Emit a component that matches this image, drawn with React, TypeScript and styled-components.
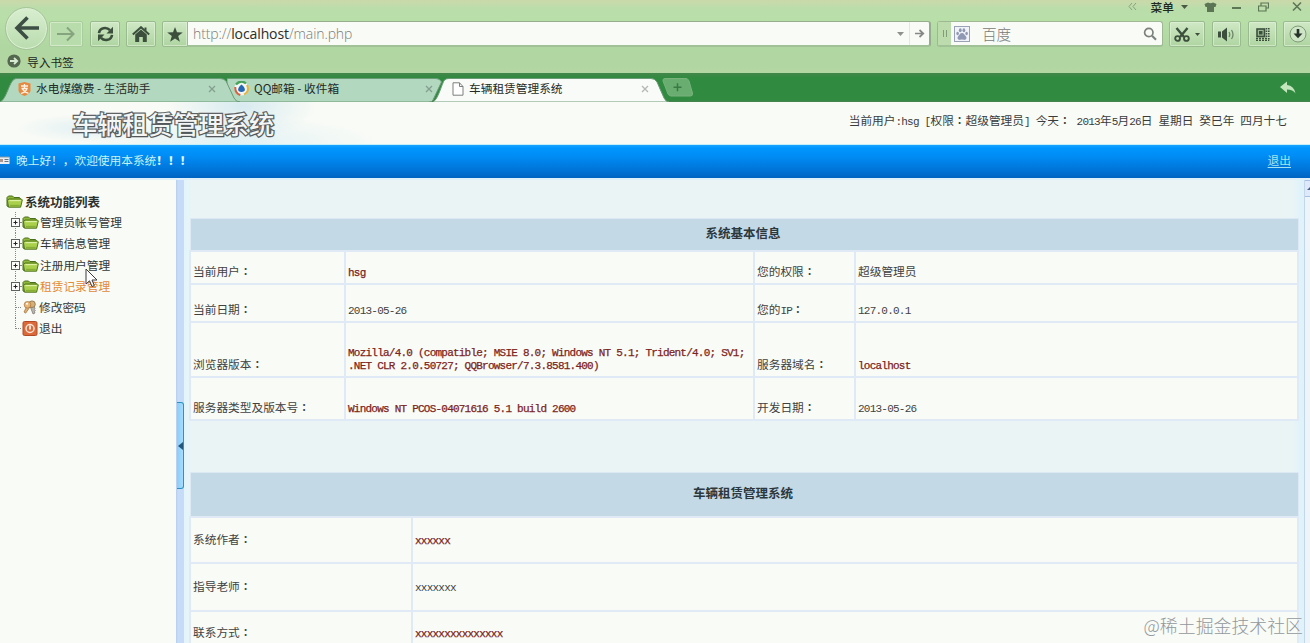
import React from "react";
import styled, { createGlobalStyle, css } from "styled-components";

const Global = createGlobalStyle`
  * { box-sizing: border-box; }
  html, body { margin: 0; padding: 0; overflow: hidden; }
  body {
    font-family: "Noto Sans CJK SC", sans-serif;
    font-size: 11.7px;
    line-height: 13px;
    color: #3a3c3c;
  }
`;

/* ---------- text: full-width ideographs mixed with half-width latin ---------- */

const Half = styled.span<{ $bold?: boolean }>`
  font-family: "Liberation Mono", monospace;
  font-size: 11px;
  letter-spacing: -0.77px;
  line-height: 0;
  white-space: pre;
  ${(p) => p.$bold && css`-webkit-text-stroke: 0.25px currentColor;`}
`;

const Colon = styled.span`
  font-family: "Noto Sans CJK TC", sans-serif;
  font-weight: 500;
  line-height: 0;
`;

function Mixed({ text, bold }: { text: string; bold?: boolean }) {
  const runs = text.match(/[\x20-\x7e]+|：|[^\x20-\x7e：]+/g) || [];
  return (
    <>
      {runs.map((run, i) => {
        if (run === "：") return <Colon key={i}>{run}</Colon>;
        if (/^[\x20-\x7e]/.test(run)) return <Half key={i} $bold={bold}>{run}</Half>;
        return <React.Fragment key={i}>{run}</React.Fragment>;
      })}
    </>
  );
}

/* ---------- window ---------- */

const Screen = styled.div`
  position: relative;
  width: 1310px;
  height: 643px;
  overflow: hidden;
  display: flex;
  flex-direction: column;
  background: #f8fbf6;
`;

const Chrome = styled.header`
  height: 73px;
  flex: none;
  background: linear-gradient(#cad8a9 0, #c5dbab 4px, #badda9 8px, #b9dfa9 20px, #b0d6a1 46px, #b3d6a3 73px);
`;

const TitleRow = styled.div`
  height: 13px;
  display: flex;
  justify-content: flex-end;
  align-items: center;
  padding-right: 8px;
  color: #202a1e;
`;

const MenuLabel = styled.span`
  margin: 0 7px 0 14px;
  font-weight: 500;
`;

const WindowIcon = styled.svg<{ $gap: number }>`
  margin-left: ${(p) => p.$gap}px;
  flex: none;
`;

const ToolRow = styled.div`
  height: 42px;
  display: flex;
  align-items: center;
  padding-left: 5px;
`;

const BackButton = styled.div`
  width: 43px;
  height: 43px;
  margin-top: -12px;
  flex: none;
  border-radius: 50%;
  border: 1px solid #a5c49a;
  background: linear-gradient(#d9eed0, #b9dcae);
  box-shadow: inset 0 0 0 1px #dcf0d3;
  display: flex;
  align-items: center;
  justify-content: center;
`;

const ToolButton = styled.div<{ $w: number; $gap?: number; $joined?: boolean; $faint?: boolean }>`
  width: ${(p) => p.$w}px;
  height: 26px;
  flex: none;
  margin-left: ${(p) => p.$gap ?? 7}px;
  display: flex;
  align-items: center;
  justify-content: center;
  gap: 5px;
  border: 1px solid ${(p) => (p.$faint ? "#a9cd9c" : "#9abb8f")};
  border-radius: ${(p) => (p.$joined ? "2px 0 0 2px" : "2px")};
  background: ${(p) => (p.$faint ? "#b8dcab" : "linear-gradient(#cfe8c5, #afd5a1)")};
  box-shadow: inset 0 0 0 1px rgba(226, 244, 218, 0.6);
`;

const AddressBar = styled.div`
  width: 743px;
  height: 26px;
  flex: none;
  display: flex;
  align-items: center;
  padding-left: 5px;
  background: #f9fbf7;
  border: 1px solid #95ad8c;
  border-width: 1px 2px 2px 0;
  border-bottom-color: #a1c196;
  border-radius: 0 3px 3px 0;
`;

const Url = styled.span`
  flex: 1;
  font-family: "Open Sans", sans-serif;
  font-size: 14px;
  letter-spacing: -0.1px;
  font-weight: 300;
  color: #7b7d7a;
  b { font-weight: 400; color: #2b2d2a; }
`;

const GoCell = styled.div`
  width: 20px;
  height: 23px;
  margin-left: 5px;
  border-left: 1px solid #e3e8e0;
  display: flex;
  align-items: center;
  justify-content: center;
`;

const SearchBar = styled.div`
  width: 226px;
  height: 26px;
  flex: none;
  margin-left: 6px;
  display: flex;
  align-items: center;
  background: #f9fbf7;
  border: 1px solid #9db893;
  border-bottom: 2px solid #a1c196;
  border-radius: 3px;
  padding-right: 5px;
`;

const Grip = styled.div`
  width: 13px;
  height: 23px;
  background: #bcdcae;
  display: flex;
  align-items: center;
  justify-content: center;
  gap: 2px;
  i { width: 1px; height: 7px; background: #7f9d77; }
`;

const EngineIcon = styled.svg`
  margin: 2px 0 0 3px;
`;

const SearchHint = styled.span`
  flex: 1;
  padding: 0 0 1px 11px;
  font-size: 14.6px;
  font-weight: 300;
  color: #777a78;
`;

const BookmarkRow = styled.div`
  height: 18px;
  display: flex;
  align-items: center;
  gap: 6px;
  padding: 0 0 6px 7px;
  color: #1d281b;
`;

/* ---------- tabs ---------- */

const TabBar = styled.div`
  height: 29px;
  flex: none;
  display: flex;
  align-items: flex-end;
  background: linear-gradient(#44864b, #308a40 5px, #308a40 27px, #4a8351);
`;

const TabBox = styled.div<{ $w: number; $lap?: number; $pad: number; $end: number; $front?: number }>`
  position: relative;
  z-index: ${(p) => p.$front ?? 1};
  width: ${(p) => p.$w}px;
  height: 24px;
  flex: none;
  margin-left: ${(p) => -(p.$lap ?? 0)}px;
  padding: 0 ${(p) => p.$end}px 3px ${(p) => p.$pad}px;
  display: flex;
  align-items: center;
  color: #222b27;
`;

const TabShape = styled.svg`
  position: absolute;
  left: 0;
  top: 0;
  z-index: -1;
`;

const TabText = styled.span`
  flex: 1;
  margin: 0 0 2px 5px;
  white-space: pre;
`;

const TabTail = styled.div`
  flex: 1;
  height: 24px;
  display: flex;
  justify-content: space-between;
  align-items: flex-start;
  padding: 0 14px 0 0;
  margin-left: -7px;
`;

/* ---------- site header ---------- */

const Banner = styled.div`
  height: 43px;
  flex: none;
  display: flex;
  align-items: center;
  justify-content: space-between;
  padding: 0 23px 2px 72px;
  border-bottom: 1px solid #c5eefa;
  background:
    radial-gradient(ellipse 75px 34px at 242px 4px, rgba(198, 226, 236, 0.65), transparent),
    radial-gradient(ellipse 70px 14px at 85px 26px, rgba(205, 231, 240, 0.5), transparent),
    radial-gradient(ellipse 150px 26px at 230px 40px, rgba(222, 240, 244, 0.9), transparent),
    #f9fbf6;
`;

const SiteName = styled.h1`
  margin: 2px 0 0;
  font-size: 25.3px;
  line-height: 30px;
  font-weight: 500;
  color: #f4f6f5;
  -webkit-text-stroke: 2.4px #5d6365;
  paint-order: stroke fill;
  text-shadow: 1px 1px 1px rgba(60, 66, 68, 0.4);
`;

const Status = styled.div`
  white-space: pre;
  margin-bottom: 5px;
`;

const BlueBar = styled.div`
  height: 33px;
  flex: none;
  display: flex;
  align-items: center;
  padding: 0 19px 3px 0;
  color: #c5f2f6;
  background: linear-gradient(#18a5ff 0, #0096ff 3px, #008bf3 12px, #0074d8 25px, #0063c0 33px);
`;

const Greeting = styled.span`
  flex: 1;
  margin: 0 0 1px 6px;
  b { font-weight: 900; color: #e2fbff; }
`;

const Logout = styled.a`
  margin-bottom: 2px;
  color: #a5e4ee;
  text-decoration: underline;
  text-underline-offset: 2px;
`;

/* ---------- body ---------- */

const Body = styled.div`
  flex: 1;
  min-height: 0;
  display: flex;
  border-top: 2px solid #e0f0fb;
`;

const Sidebar = styled.nav`
  width: 176px;
  flex: none;
  padding: 11px 0 0 6px;
`;

const RootNode = styled.div`
  height: 21px;
  display: flex;
  align-items: center;
  gap: 2px;
  font-size: 12.5px;
  font-weight: 700;
  color: #2c302c;
  span { padding-bottom: 1px; }
`;

const TreeRow = styled.div<{ $hot?: boolean }>`
  height: 21.25px;
  display: flex;
  align-items: center;
  padding-left: 5px;
  color: ${(p) => (p.$hot ? "#e28a35" : "#333735")};
`;

const Joint = styled.svg`
  flex: none;
`;

const NodeText = styled.span`
  margin: 0 0 2px 1px;
`;

const Splitter = styled.div`
  width: 8px;
  flex: none;
  background: linear-gradient(90deg, #b6cdec, #c8dcf8 2px, #c5dbf8);
  display: flex;
  flex-direction: column;
  padding-top: 222px;
`;

const Handle = styled.div`
  height: 87px;
  margin-left: 1px;
  border: 1px solid #2c93bf;
  border-left: 0;
  border-radius: 0 3px 3px 0;
  background: linear-gradient(90deg, #8acdf8, #a6dcff);
  display: flex;
  align-items: center;
  justify-content: flex-end;
`;

const Content = styled.main`
  flex: 1;
  min-width: 0;
  padding: 38px 5px 0 5px;
  background: linear-gradient(90deg, #e2f5fb, #eaf4f5 9px, #eaf4f5 1108px, #e0f3fa 1116px);
`;

const ScrollTrack = styled.div`
  width: 6px;
  flex: none;
  border-left: 1px solid #c3d6ea;
  background: #eef5fa;
`;

const ScrollUp = styled.div`
  height: 17px;
  border: 1px solid #a9bfe2;
  border-width: 1px 0 1px 0;
  background: #dfe9fb;
  display: flex;
  align-items: center;
  justify-content: flex-end;
`;

const Grid = styled.table`
  width: 1110px;
  border-collapse: collapse;
  table-layout: fixed;
  border: 1px solid #dce9f5;
  & + & { margin-top: 51px; }
`;

const Head = styled.th<{ $h: number }>`
  height: ${(p) => p.$h}px;
  padding: 0 2px 3px 0;
  background: #c3d9e5;
  color: #2b383e;
  font-size: 12.5px;
  font-weight: 700;
`;

const Cell = styled.td<{ $h?: number; $mid?: boolean; $red?: boolean }>`
  ${(p) => p.$h && css`height: ${p.$h}px;`}
  vertical-align: ${(p) => (p.$mid ? "middle" : "bottom")};
  padding: 0 2px ${(p) => (p.$mid ? 3 : 6)}px 2px;
  border: 2px solid #e0e9f6;
  background: #f8fbf6;
  color: ${(p) => (p.$red ? "#7d2420" : "#3f4242")};
  line-height: 13px;
  white-space: nowrap;
`;

const Watermark = styled.div`
  position: absolute;
  right: 7px;
  bottom: 6px;
  font-size: 17.9px;
  line-height: 24px;
  font-weight: 300;
  color: #92979a;
  text-shadow: 0 0 1px #fff;
`;

const Pointer = styled.svg`
  position: absolute;
  left: 85px;
  top: 268px;
`;

/* ---------- icons ---------- */

const Folder = () => (
  <svg width="17" height="15" viewBox="0 0 17 15">
    <path d="M1 12V3.5L2.5 2h4L8 3.5h5.5L14.5 5v7.5H2z" fill="#8fb83a" stroke="#4d6f1c" />
    <path d="M2.5 13.2 1.4 6.4 3 5h12.4l.9 1-1.7 7.2z" fill="#a9cf4b" stroke="#50751d" />
    <path d="M3.4 6.6h11.4" stroke="#dcf0a0" strokeWidth="1.2" />
    <path d="M4 11.6h9.7" stroke="#88ad35" strokeWidth="1.5" />
  </svg>
);

const KeyIcon = () => (
  <svg width="16" height="15" viewBox="0 0 16 15">
    <path d="M8 6 11 14l2-1-.6-1.5 1-.8-1-1.2.6-1L11 4" fill="#b8b6ae" stroke="#77746d" strokeWidth=".7" />
    <circle cx="10" cy="4.2" r="3.3" fill="#d4b07a" stroke="#8a6b43" strokeWidth=".8" />
    <path d="M5 6 2 12l1.6 1.2L8 7" fill="#e0b070" stroke="#a06d35" strokeWidth=".7" />
    <circle cx="5.5" cy="4.8" r="3.3" fill="#eab876" stroke="#ad7a42" strokeWidth=".8" />
    <circle cx="5" cy="3.8" r="1" fill="#fff" />
  </svg>
);

const PowerIcon = () => (
  <svg width="16" height="15" viewBox="0 0 16 15">
    <rect x="1" y=".5" width="14" height="14" rx="1.5" fill="#db6a3b" stroke="#b34a25" />
    <circle cx="8" cy="7.5" r="4" fill="none" stroke="#fae4d6" strokeWidth="1.5" />
    <path d="M8 4.5v4" stroke="#fff" strokeWidth="1.6" />
  </svg>
);

const Branch = ({ kind }: { kind: "plus" | "leaf" | "last" }) => (
  <Joint width="11" height="21" viewBox="0 0 11 21">
    <path d={kind === "last" ? "M4.5 0V11" : "M4.5 0V21"} stroke="#858985" strokeDasharray="1 1" />
    {kind !== "plus" && <path d="M5 10.5h6" stroke="#858985" strokeDasharray="1 1" />}
    {kind === "plus" && (
      <>
        <rect x=".5" y="6.5" width="8" height="8" fill="#fbfcfa" stroke="#5d625e" />
        <path d="M2.5 10.5h4M4.5 8.5v4" stroke="#222" />
        <path d="M9 10.5h2" stroke="#858985" />
      </>
    )}
  </Joint>
);

const Caret = ({ color = "#4b5a47" }: { color?: string }) => (
  <svg width="7" height="4" viewBox="0 0 7 4">
    <path d="M0 0h7L3.5 4z" fill={color} />
  </svg>
);

const CloseX = ({ color }: { color: string }) => (
  <svg width="8" height="8" viewBox="0 0 8 8">
    <path d="M1 1l6 6M7 1 1 7" stroke={color} strokeWidth="1.3" />
  </svg>
);

const INK = "#3c4f3d";

type TabProps = { w: number; lap?: number; pad: number; end: number; d: string; fill: string; icon: React.ReactNode; label: string; x: string; front?: number };

function Tab({ w, lap, pad, end, d, fill, icon, label, x, front }: TabProps) {
  return (
    <TabBox $w={w} $lap={lap} $pad={pad} $end={end} $front={front}>
      <TabShape width={w} height="24" viewBox={`0 0 ${w} 24`}>
        <path d={d} fill={fill} stroke="#6b9a76" strokeWidth="1" />
      </TabShape>
      {icon}
      <TabText>{label}</TabText>
      <CloseX color={x} />
    </TabBox>
  );
}

const tree: { label: string; kind: "plus" | "leaf" | "last"; icon: React.ReactNode; hot?: boolean }[] = [
  { label: "管理员帐号管理", kind: "plus", icon: <Folder /> },
  { label: "车辆信息管理", kind: "plus", icon: <Folder /> },
  { label: "注册用户管理", kind: "plus", icon: <Folder /> },
  { label: "租赁记录管理", kind: "plus", icon: <Folder />, hot: true },
  { label: "修改密码", kind: "leaf", icon: <KeyIcon /> },
  { label: "退出", kind: "last", icon: <PowerIcon /> },
];

type Value = { lines: string[]; red?: boolean };
const info: { h: number; a: string; av: Value; b: string; bv: Value }[] = [
  { h: 33, a: "当前用户：", av: { lines: ["hsg"], red: true }, b: "您的权限：", bv: { lines: ["超级管理员"] } },
  { h: 38, a: "当前日期：", av: { lines: ["2013-05-26"] }, b: "您的IP：", bv: { lines: ["127.0.0.1"] } },
  {
    h: 55,
    a: "浏览器版本：",
    av: {
      lines: [
        "Mozilla/4.0 (compatible; MSIE 8.0; Windows NT 5.1; Trident/4.0; SV1;",
        ".NET CLR 2.0.50727; QQBrowser/7.3.8581.400)",
      ],
      red: true,
    },
    b: "服务器域名：",
    bv: { lines: ["localhost"], red: true },
  },
  {
    h: 43,
    a: "服务器类型及版本号：",
    av: { lines: ["Windows NT PCOS-04071616 5.1 build 2600"], red: true },
    b: "开发日期：",
    bv: { lines: ["2013-05-26"] },
  },
];

const about = [
  { label: "系统作者：", value: "xxxxxx", red: true, h: 46 },
  { label: "指导老师：", value: "xxxxxxx", red: false, h: 48 },
  { label: "联系方式：", value: "xxxxxxxxxxxxxxx", red: true, h: 44 },
];

const ValueCell = ({ v }: { v: Value }) => (
  <Cell $red={v.red}>
    {v.lines.map((line) => (
      <div key={line}>
        <Mixed text={line} bold={v.red} />
      </div>
    ))}
  </Cell>
);

export default function App() {
  return (
    <Screen>
      <Global />
      <Chrome>
        <TitleRow>
          <WindowIcon $gap={0} width="9" height="9" viewBox="0 0 9 9">
            <path d="M4 1 1 4.5 4 8M8 1 5 4.5 8 8" fill="none" stroke="#86a27e" />
          </WindowIcon>
          <MenuLabel>菜单</MenuLabel>
          <Caret />
          <WindowIcon $gap={16} width="13" height="10" viewBox="0 0 13 10">
            <path d="M.5 2 4 .5Q6.500 2 9 .5L12.500 2 11.500 5H10v5H3V5H1.500z" fill="#5c7555" />
          </WindowIcon>
          <WindowIcon $gap={15} width="9" height="9" viewBox="0 0 9 9">
            <path d="M0 6h9" stroke="#5c7555" strokeWidth="2" />
          </WindowIcon>
          <WindowIcon $gap={17} width="11" height="10" viewBox="0 0 11 10">
            <path d="M3 4V1h7.500v5H8M.5 4H8v5H.5z" fill="none" stroke="#5c7555" strokeWidth="1.2" />
          </WindowIcon>
          <WindowIcon $gap={23} width="10" height="9" viewBox="0 0 10 9">
            <path d="M1 .5 9 8.500M9 .5 1 8.500" stroke="#5c7555" strokeWidth="1.5" />
          </WindowIcon>
        </TitleRow>
        <ToolRow>
          <BackButton>
            <svg width="26" height="26" viewBox="0 0 26 26">
              <path d="M25 13H3M13.500 2.500 3 13l10.500 10.500" fill="none" stroke="#3d4f45" strokeWidth="3.600" />
            </svg>
          </BackButton>
          <ToolButton $w={34} $gap={1} $faint>
            <svg width="18" height="16" viewBox="0 0 18 16">
              <path d="M0 8h16M10 1.500 16.500 8 10 14.500" fill="none" stroke="#86a47e" strokeWidth="2" />
            </svg>
          </ToolButton>
          <ToolButton $w={30}>
            <svg width="17" height="16" viewBox="0 0 17 16">
              <path d="M2 7.200C2.600 1.500 9.500.500 13 4.200" fill="none" stroke={INK} strokeWidth="2.600" />
              <path d="M16 .8v6.700H9.500z" fill={INK} />
              <path d="M15 8.800C14.400 14.500 7.500 15.500 4 11.800" fill="none" stroke={INK} strokeWidth="2.600" />
              <path d="M1 15.200V8.500h6.500z" fill={INK} />
            </svg>
          </ToolButton>
          <ToolButton $w={30} $gap={6}>
            <svg width="18" height="16" viewBox="0 0 18 16">
              <path d="M.8 8.600 9 1.200l8.200 7.400" fill="none" stroke={INK} strokeWidth="2" />
              <path d="M3.200 8.600 9 3.600l5.800 5V16h-4v-5H7.200v5h-4z" fill={INK} />
              <path d="M12.500 1.500h2v3.500l-2-1.500z" fill={INK} />
            </svg>
          </ToolButton>
          <ToolButton $w={26} $gap={6} $joined>
            <svg width="16" height="15" viewBox="0 0 16 15">
              <path d="m8 0 2 5.300 5.800.2-4.600 3.500 1.700 5.700L8 11.500l-4.900 3.200L4.800 9 .2 5.500 6 5.300z" fill={INK} />
            </svg>
          </ToolButton>
          <AddressBar>
            <Url>http://<b>localhost</b>/main.php</Url>
            <Caret color="#8e918e" />
            <GoCell>
              <svg width="10" height="9" viewBox="0 0 10 9">
                <path d="M0 4.500h8M4.500 1 8.300 4.500 4.500 8" fill="none" stroke="#858985" strokeWidth="1.700" />
              </svg>
            </GoCell>
          </AddressBar>
          <SearchBar>
            <Grip><i /><i /></Grip>
            <EngineIcon width="17" height="17" viewBox="0 0 17 17">
              <rect x=".5" y=".5" width="15" height="15" fill="#f1f3f8" stroke="#9aa2b8" />
              <g fill="#8f99b3">
                <ellipse cx="3.600" cy="7.500" rx="1.300" ry="1.800" />
                <ellipse cx="6.300" cy="4.200" rx="1.400" ry="2" />
                <ellipse cx="9.900" cy="4.200" rx="1.400" ry="2" />
                <ellipse cx="12.600" cy="7.500" rx="1.300" ry="1.800" />
                <path d="M8 7c2 0 2.500 2 4 3.500 1.500 2-.5 3.800-2 3.300q-2-.5-4 0c-1.500.5-3.500-1.300-2-3.300C5.500 9 6 7 8 7z" />
              </g>
            </EngineIcon>
            <SearchHint>百度</SearchHint>
            <svg width="14" height="14" viewBox="0 0 14 14">
              <circle cx="5.800" cy="5.500" r="4.200" fill="none" stroke="#7d817d" strokeWidth="1.700" />
              <path d="m9 8.800 4 4" stroke="#7d817d" strokeWidth="2.200" />
            </svg>
          </SearchBar>
          <ToolButton $w={36} $gap={6}>
            <svg width="16" height="15" viewBox="0 0 16 15">
              <path d="M2.500 1 10 10M13.500 1 6 10" stroke={INK} strokeWidth="2.400" />
              <circle cx="3.600" cy="11.500" r="2.400" fill="none" stroke={INK} strokeWidth="1.900" />
              <circle cx="12.400" cy="11.500" r="2.400" fill="none" stroke={INK} strokeWidth="1.900" />
            </svg>
            <svg width="5" height="3" viewBox="0 0 5 3"><path d="M0 0h5L2.500 3z" fill={INK} /></svg>
          </ToolButton>
          <ToolButton $w={29}>
            <svg width="17" height="15" viewBox="0 0 17 15">
              <path d="M0 4.500h3v6H0zM4 4.500 9 .500v14L4 10.500z" fill={INK} />
              <path d="M11 5q1.500 2.500 0 5M13.500 3q3 4.500 0 9" fill="none" stroke="#6d8668" strokeWidth="1.300" />
            </svg>
          </ToolButton>
          <ToolButton $w={29}>
            <svg width="14" height="13" viewBox="0 0 14 13">
              <rect x="1" y="1" width="7.500" height="7.500" fill="#9cba92" stroke={INK} strokeWidth="1.600" />
              <rect x="3" y="3" width="3.500" height="3.500" fill={INK} />
              <path d="M10.500 0v9M12.800 0v13" stroke={INK} strokeWidth="1.600" strokeDasharray="1.500 1" />
              <path d="M0 10.500h12M0 12.500h13" stroke={INK} strokeWidth="1.400" strokeDasharray="2 1" />
            </svg>
          </ToolButton>
          <ToolButton $w={29} $gap={6}>
            <svg width="18" height="18" viewBox="0 0 18 18">
              <circle cx="9" cy="9" r="8" fill="#cfe6c6" stroke="#7f9c78" />
              <path d="M9 4v6" stroke="#26332a" strokeWidth="2.600" />
              <path d="M4.500 8.500h9L9 13.200z" fill="#26332a" />
            </svg>
          </ToolButton>
        </ToolRow>
        <BookmarkRow>
          <svg width="14" height="14" viewBox="0 0 14 14">
            <circle cx="7" cy="7" r="6.600" fill="#53684f" />
            <path d="M3 7h6M7 4l3.200 3L7 10" fill="none" stroke="#d5ead0" strokeWidth="1.800" />
          </svg>
          导入书签
        </BookmarkRow>
      </Chrome>

      <TabBar>
        <Tab
          w={240}
          pad={18}
          end={24}
          front={2}
          d="M0 24C7 21 9 3 15 .8Q16 .5 18 .5H220Q224 .5 226 3L234 20Q236 24 240 24Z"
          fill="#b2d8c0"
          x="#849f8e"
          label="水电煤缴费 - 生活助手"
          icon={
            <svg width="13" height="14" viewBox="0 0 13 14">
              <path d="M.5 1.500 6.500 0l6 1.500V9q-1 3-6 5-5-2-6-5z" fill="#e58a42" />
              <path d="M3 4h7M6.500 2v4M3.500 6.500h5.500Q8 10 3 11.500M4.500 7q2 3.500 6 4.300" fill="none" stroke="#fff4e6" strokeWidth="1.300" />
            </svg>
          }
        />
        <Tab
          w={220}
          lap={13}
          pad={7}
          end={14}
          d="M0 .5H209Q213 .5 214.500 4L206 22Q205 24 202 24H0Z"
          fill="#b2d8c0"
          x="#849f8e"
          label="QQ邮箱 - 收件箱"
          icon={
            <svg width="15" height="15" viewBox="0 0 15 15">
              <circle cx="7.500" cy="7.500" r="7" fill="#f4f8f5" />
              <path d="M2 3.500Q7-2 12 2.500" fill="none" stroke="#4aa35b" strokeWidth="2.200" />
              <path d="M13 4q3 6-3 9.500" fill="none" stroke="#e3b53f" strokeWidth="2" />
              <path d="M1.300 6q-.5 6 5 8" fill="none" stroke="#d9603c" strokeWidth="2" />
              <path d="M7.500 3.500q4.500 3.500 3 6.500-3 2-6 0-1.500-3 3-6.500z" fill="#2668b5" />
            </svg>
          }
        />
        <Tab
          w={236}
          lap={14}
          pad={19}
          end={20}
          front={3}
          d="M0 24C5 22 9 5 11.500 2Q13 .5 16 .5H218Q222 .5 224 4L231 20Q233 24 236 24Z"
          fill="#f9fbf8"
          x="#b3b8b3"
          label="车辆租赁管理系统"
          icon={
            <svg width="12" height="14" viewBox="0 0 12 14">
              <path d="M1 .8h6.500L11 4.500v8.700H1zM7.500.8v3.700H11" fill="#fff" stroke="#7c7f7d" />
            </svg>
          }
        />
        <TabTail>
          <svg width="31" height="19" viewBox="0 0 31 19">
            <path d="M3 .5H24Q26 .5 27 3l3.500 12q.5 3-2 3H9Q7 18 6 16L1 3Q.5.500 3 .5z" fill="#69ae70" stroke="#78b27c" />
            <path d="M11.500 9.200h8M15.500 5.200v8" stroke="#397a44" strokeWidth="1.500" />
          </svg>
          <svg width="16" height="16" viewBox="0 -3 16 16">
            <path d="M0 6 7 .5V4q7 .5 8.500 8.500Q13 8.500 7 8.500V12z" fill="#c3e6bd" />
          </svg>
        </TabTail>
      </TabBar>

      <Banner>
        <SiteName>车辆租赁管理系统</SiteName>
        <Status>
          <Mixed text="当前用户:hsg [权限：超级管理员] 今天： 2013年5月26日 星期日 癸巳年 四月十七" />
        </Status>
      </Banner>

      <BlueBar>
        <svg width="10" height="9" viewBox="0 0 10 9">
          <path d="M0 1h9.500v7H0z" fill="#e9eef2" />
          <path d="M0 1h9.500" stroke="#8797a6" />
          <path d="M0 3h3v3H0z" fill="#a9978f" />
          <path d="M4.500 3.500h4M4.500 5.500h4" stroke="#68757f" />
        </svg>
        <Greeting>晚上好！，欢迎使用本系统<b>！！！</b></Greeting>
        <Logout>退出</Logout>
      </BlueBar>

      <Body>
        <Sidebar>
          <RootNode>
            <Folder />
            <span>系统功能列表</span>
          </RootNode>
          {tree.map((n) => (
            <TreeRow key={n.label} $hot={n.hot}>
              <Branch kind={n.kind} />
              {n.icon}
              <NodeText>{n.label}</NodeText>
            </TreeRow>
          ))}
        </Sidebar>
        <Splitter>
          <Handle>
            <svg width="5" height="8" viewBox="0 0 5 8"><path d="M5 0v8L0 4z" fill="#24577d" /></svg>
          </Handle>
        </Splitter>
        <Content>
          <Grid>
            <colgroup>
              <col style={{ width: 155 }} />
              <col style={{ width: 409 }} />
              <col style={{ width: 101 }} />
              <col />
            </colgroup>
            <thead>
              <tr><Head $h={32} colSpan={4}>系统基本信息</Head></tr>
            </thead>
            <tbody>
              {info.map((r) => (
                <tr key={r.a}>
                  <Cell $h={r.h}><Mixed text={r.a} /></Cell>
                  <ValueCell v={r.av} />
                  <Cell><Mixed text={r.b} /></Cell>
                  <ValueCell v={r.bv} />
                </tr>
              ))}
            </tbody>
          </Grid>
          <Grid>
            <colgroup>
              <col style={{ width: 222 }} />
              <col />
            </colgroup>
            <thead>
              <tr><Head $h={45} colSpan={2}>车辆租赁管理系统</Head></tr>
            </thead>
            <tbody>
              {about.map((r) => (
                <tr key={r.label}>
                  <Cell $h={r.h} $mid><Mixed text={r.label} /></Cell>
                  <Cell $mid $red={r.red}><Mixed text={r.value} bold={r.red} /></Cell>
                </tr>
              ))}
            </tbody>
          </Grid>
        </Content>
        <ScrollTrack>
          <ScrollUp>
            <svg width="3" height="3" viewBox="0 0 3 3"><path d="M0 3 3 0v3z" fill="#4d6185" /></svg>
          </ScrollUp>
        </ScrollTrack>
      </Body>

      <Watermark>@稀土掘金技术社区</Watermark>
      <Pointer width="13" height="20" viewBox="0 0 13 20">
        <path d="M1 1v15l3.500-3.200L7 18.500l2.300-1L7 12h5z" fill="#fdfdfd" stroke="#3b3b3b" />
      </Pointer>
    </Screen>
  );
}
